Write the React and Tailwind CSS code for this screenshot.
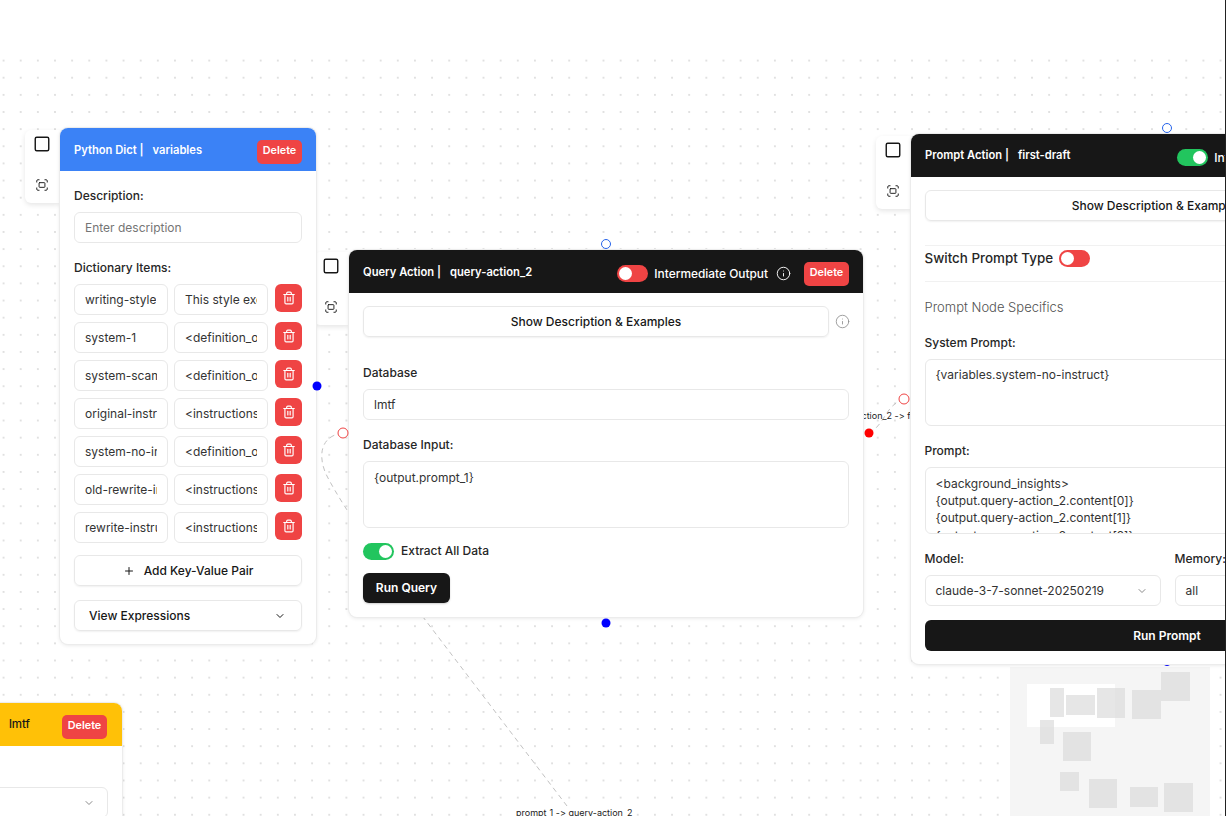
import React from "react";
import { Trash2, Square, Fullscreen, Info, ChevronDown, Plus } from "lucide-react";

const field = "border border-[#e8e8e8] rounded-md bg-white text-[12px] text-[#333333] flex items-center";
const nodeBox = "absolute bg-white rounded-lg shadow-[0_0_0_1px_#ececec,0_1px_4px_rgba(0,0,0,0.12)] overflow-hidden z-10";
const title = "text-white text-[11.2px] font-semibold flex";

function Toolbar({ className }) {
  return (
    <div className={"absolute w-[35px] h-[73px] bg-white rounded-l-md shadow-[0_2px_5px_rgba(0,0,0,0.1)] flex flex-col items-center pt-[5px] pr-[1px] gap-[25px] text-[#171717] " + className}>
      <Square size={18} strokeWidth={1.9} />
      <Fullscreen size={14} strokeWidth={1.6} />
    </div>
  );
}

function Toggle({ on, className = "" }) {
  return (
    <div className={"w-[31px] h-[17px] rounded-full flex items-center px-[2px] shrink-0 " + (on ? "bg-[#22c55e] justify-end " : "bg-[#ef4444] justify-start ") + className}>
      <div className="w-[13px] h-[13px] rounded-full bg-white" />
    </div>
  );
}

function Del({ className = "" }) {
  return (
    <button className={"w-[45px] h-[24px] bg-[#ef4444] rounded-[5px] text-white text-[10.8px] font-semibold flex items-center justify-center shrink-0 " + className}>
      Delete
    </button>
  );
}

function Handle({ x, y, filled, color, size = 10, behind }) {
  return (
    <div
      className={"absolute rounded-full -translate-x-1/2 -translate-y-1/2 " + (behind ? "z-0 " : "z-20 ") + (filled ? "" : "border bg-white")}
      style={{ left: x, top: y, width: size, height: size, backgroundColor: filled ? color : undefined, borderColor: color }}
    />
  );
}

const rows = [
  ["writing-style", "This style exe"],
  ["system-1", "<definition_o"],
  ["system-scam", "<definition_o"],
  ["original-instr", "<instructions"],
  ["system-no-ir", "<definition_o"],
  ["old-rewrite-ir", "<instructions"],
  ["rewrite-instru", "<instructions"],
];

function PythonNode() {
  return (
    <div className={nodeBox + " left-[60px] top-[128px] w-[256px] h-[516px]"}>
      <div className="h-[43px] bg-[#3b82f6] flex items-center justify-between px-[14px] pt-[4px]">
        <div className={title + " gap-[9px] -mt-[2px]"}>
          <span>Python Dict |</span><span>variables</span>
        </div>
        <Del />
      </div>
      <div className="px-[14px]">
        <div className="text-[12px] font-medium text-[#262626] mt-[17px] leading-[16px]">Description:</div>
        <div className={field + " h-[31px] mt-[8px] px-[10px] text-[#757575]"}>Enter description</div>
        <div className="text-[12px] font-medium text-[#262626] mt-[17px] leading-[16px]">Dictionary Items:</div>
        <div className="mt-[8px] flex flex-col gap-[7px]">
          {rows.map(([k, v]) => (
            <div key={k} className="flex items-start gap-[6px]">
              <div className={field + " w-[94px] h-[31px] px-[10px]"}><span className="overflow-hidden whitespace-nowrap">{k}</span></div>
              <div className={field + " w-[94px] h-[31px] px-[10px]"}><span className="overflow-hidden whitespace-nowrap">{v}</span></div>
              <div className="ml-[1px] w-[27px] h-[28px] bg-[#ef4444] rounded-md flex items-center justify-center text-white shrink-0"><Trash2 size={14} /></div>
            </div>
          ))}
        </div>
        <button className="mt-[12px] w-full h-[31px] border border-[#e8e8e8] rounded-md shadow-[0_1px_2px_rgba(0,0,0,0.06)] text-[12px] font-medium text-[#171717] flex items-center justify-center gap-[9px]">
          <Plus size={12} /> Add Key-Value Pair
        </button>
        <button className="mt-[14px] w-full h-[31px] border border-[#e8e8e8] rounded-md shadow-[0_1px_2px_rgba(0,0,0,0.06)] text-[12px] font-medium text-[#171717] flex items-center justify-between pl-[14px] pr-[15px]">
          View Expressions <ChevronDown size={12} />
        </button>
      </div>
    </div>
  );
}

function ShowRow() {
  return (
    <div className="flex items-center gap-[6px]">
      <button className="flex-1 h-[31px] border border-[#e8e8e8] rounded-md shadow-[0_1px_2px_rgba(0,0,0,0.06)] text-[12px] font-medium text-[#171717] flex items-center justify-center">
        Show Description &amp; Examples
      </button>
      <div className="w-[14px] flex justify-center text-[#8a8a8a]"><Info size={15} strokeWidth={1.3} className="shrink-0" /></div>
    </div>
  );
}

function HeaderRight({ on }) {
  return (
    <div className="flex items-center">
      <Toggle on={on} />
      <span className="text-white text-[11.9px] font-medium ml-[6px] mr-[2px]">Intermediate Output</span>
      <Info size={15} strokeWidth={1.5} className="text-white ml-[6px]" />
      <Del className="ml-[13px]" />
    </div>
  );
}

function QueryNode() {
  return (
    <div className={nodeBox + " left-[349px] top-[250px] w-[514px] h-[367px]"}>
      <div className="h-[43px] bg-[#171717] flex items-center justify-between px-[14px] pt-[4px]">
        <div className={title + " gap-[9px] -mt-[3px]"}>
          <span>Query Action |</span><span>query-action_2</span>
        </div>
        <HeaderRight />
      </div>
      <div className="px-[14px] pt-[13px]">
        <ShowRow />
        <div className="text-[12px] font-medium text-[#262626] mt-[28px] leading-[16px]">Database</div>
        <div className={field + " h-[31px] mt-[8px] px-[10px] pt-[1px]"}>lmtf</div>
        <div className="text-[12px] font-medium text-[#262626] mt-[17px] leading-[16px]">Database Input:</div>
        <div className="border border-[#e8e8e8] rounded-md h-[67px] mt-[8px] px-[10px] pt-[7px] text-[12px] text-[#333333]">{"{output.prompt_1}"}</div>
        <div className="flex items-center mt-[14px] gap-[7px]">
          <Toggle on />
          <span className="text-[12px] font-medium text-[#262626]">Extract All Data</span>
        </div>
        <button className="mt-[13px] w-[87px] h-[30px] bg-[#171717] rounded-md text-white text-[12px] font-semibold shadow-[0_1px_2px_rgba(0,0,0,0.2)]">Run Query</button>
      </div>
    </div>
  );
}

function PromptNode() {
  return (
    <div className={nodeBox + " left-[911px] top-[134px] w-[512px] h-[530px]"}>
      <div className="h-[43px] bg-[#171717] flex items-center justify-between px-[14px] pt-[4px]">
        <div className={title + " gap-[9px] -mt-[4px]"}>
          <span>Prompt Action |</span><span>first-draft</span>
        </div>
        <HeaderRight on />
      </div>
      <div className="px-[13.5px] pt-[13px]">
        <ShowRow />
        <div className="mt-[24px] border-t border-b border-[#f1f1f1] h-[37px] flex items-center pb-[11px]">
          <span className="text-[13.4px] font-medium text-[#262626]">Switch Prompt Type</span>
          <Toggle className="ml-[6px]" />
        </div>
        <div className="text-[13px] font-light text-[#525252] mt-[15px] leading-[20px]">Prompt Node Specifics</div>
        <div className="text-[12px] font-medium text-[#262626] mt-[18px] leading-[16px]">System Prompt:</div>
        <div className="border border-[#e8e8e8] rounded-md h-[67px] mt-[8px] px-[10px] pt-[6px] text-[12px] text-[#333333]">{"{variables.system-no-instruct}"}</div>
        <div className="text-[12px] font-medium text-[#262626] mt-[17px] leading-[16px]">Prompt:</div>
        <div className="border border-[#e8e8e8] rounded-md h-[67px] mt-[8px] px-[10px] pt-[7px] text-[12px] leading-[17.2px] text-[#333333] overflow-hidden">
          <div>{"<background_insights>"}</div>
          <div>{"{output.query-action_2.content[0]}"}</div>
          <div>{"{output.query-action_2.content[1]}"}</div>
          <div>{"{output.query-action_2.content[2]}"}</div>
        </div>
        <div className="flex gap-[14px] mt-[17px]">
          <div className="w-[236px]">
            <div className="text-[12px] font-medium text-[#262626] leading-[16px]">Model:</div>
            <div className={field + " h-[31px] mt-[8px] pl-[10px] pr-[12px] justify-between"}>claude-3-7-sonnet-20250219 <ChevronDown size={12} className="text-[#8a8a8a]" /></div>
          </div>
          <div className="w-[100px]">
            <div className="text-[12px] font-medium text-[#262626] leading-[16px]">Memory:</div>
            <div className={field + " h-[31px] mt-[8px] pl-[10px]"}>all</div>
          </div>
        </div>
        <button className="mt-[14px] w-full h-[31px] bg-[#171717] rounded-md text-white text-[12px] font-semibold">Run Prompt</button>
      </div>
    </div>
  );
}

function DbNode() {
  return (
    <div className={nodeBox + " left-[-134px] top-[703px] w-[256px] h-[200px]"}>
      <div className="h-[43px] bg-[#ffc107] flex items-center justify-end px-[15px] pt-[4px]">
        <span className="text-[11.5px] font-medium text-[#171717] mr-[32px] -mt-[3px]">lmtf</span>
        <Del />
      </div>
      <div className="px-[14px] mt-[41px]">
        <div className={field + " h-[31px] pr-[12px] justify-end"}><ChevronDown size={12} className="text-[#8a8a8a]" /></div>
      </div>
    </div>
  );
}

function Edges() {
  return (
    <svg className="absolute inset-0 z-0" width="1226" height="816" fill="none" stroke="#c2c2c2" strokeWidth="1" strokeDasharray="5 4">
      <path d="M343 433 C 318 436 318 460 328 478 C 345 510 380 560 423 617 L 567 806" />
      <path d="M869 433 C 885 425 885 405 904 399" />
    </svg>
  );
}

function Minimap() {
  const r = [
    [1050, 688, 14, 29], [1066, 695, 29, 20], [1097, 688, 28, 30], [1132, 690, 29, 29],
    [1161, 672, 29, 29], [1040, 720, 14, 24], [1063, 732, 28, 29], [1060, 772, 19, 19],
    [1089, 779, 28, 29], [1130, 787, 28, 20], [1164, 783, 29, 29],
  ];
  return (
    <svg className="absolute left-[1010px] top-[667px] z-0" width="200" height="149" viewBox="1010 667 200 149">
      <rect x="1010" y="667" width="200" height="149" fill="#f5f5f5" />
      <rect x="1027" y="684" width="88" height="43" fill="#ffffff" />
      {r.map(([x, y, w, h]) => (
        <rect key={x + "-" + y} x={x} y={y} width={w} height={h} fill="#dcdcdc" fillOpacity="0.7" />
      ))}
    </svg>
  );
}

export default function App() {
  return (
    <div className="relative w-[1226px] h-[816px] overflow-hidden bg-white font-['Inter',sans-serif]">
      <div className="h-full mt-[52.4px] bg-[radial-gradient(circle,#b8b8b8_0.5px,transparent_0.8px)] bg-[size:17.15px_17.15px] bg-[position:-5px_0px]" />
      <Edges />
      <div className="absolute left-[516px] top-[807px] text-[9px] text-[#222] leading-[11px] bg-white whitespace-nowrap z-0 [font-variant-ligatures:none] [font-feature-settings:'calt'_0]">prompt_1 -&gt; query-action_2</div>
      <div className="absolute left-[828px] top-[410px] text-[9px] text-[#222] leading-[11px] whitespace-nowrap z-0 [font-variant-ligatures:none] [font-feature-settings:'calt'_0]">query-action_2 -&gt; first-draft</div>
      <Minimap />
      <Handle x={1167} y={661} filled color="#0000ff" behind />
      <Toolbar className="left-[25px] top-[130px]" />
      <Toolbar className="left-[314px] top-[252px]" />
      <Toolbar className="left-[876px] top-[136px]" />
      <PythonNode />
      <QueryNode />
      <PromptNode />
      <DbNode />
      <Handle x={317} y={386} filled color="#0000ff" size={9} />
      <Handle x={606} y={244} color="#2563eb" />
      <Handle x={606} y={623} filled color="#0000ff" size={9} />
      <Handle x={343} y={433} color="#ef4444" size={11} />
      <Handle x={869} y={433} filled color="#ff0000" size={9} />
      <Handle x={904} y={399} color="#ef4444" size={11} />
      <Handle x={1167} y={128} color="#2563eb" />
      <div className="absolute right-0 top-0 w-px h-full bg-[#222222] z-30" />
    </div>
  );
}
